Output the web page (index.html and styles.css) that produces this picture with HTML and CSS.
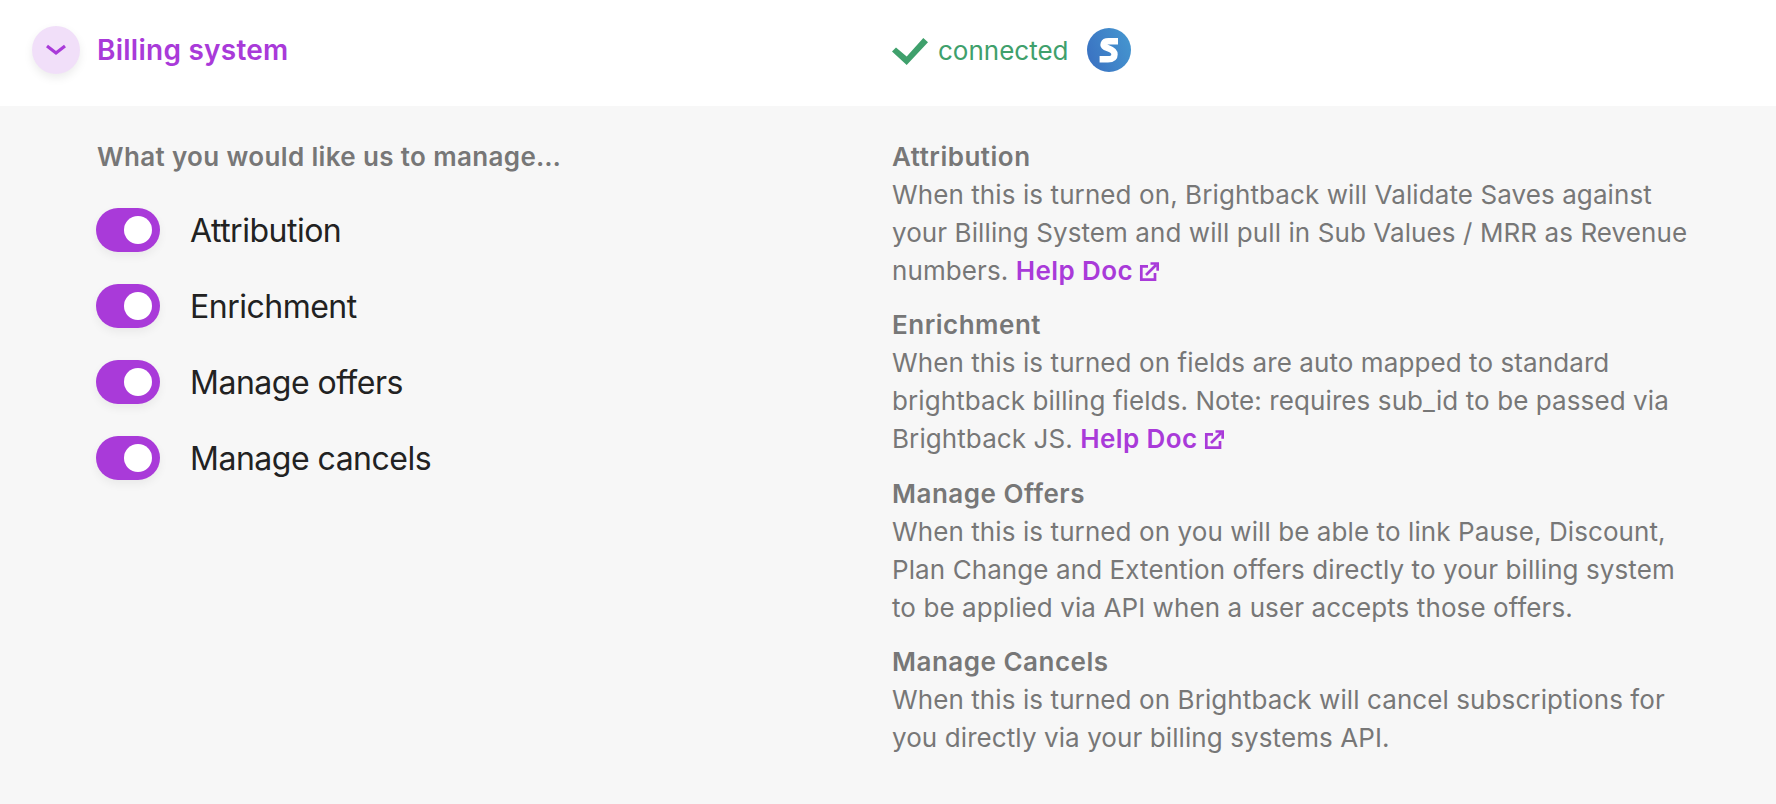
FILE: index.html
```html
<!DOCTYPE html>
<html lang="en">
<head>
<meta charset="utf-8">
<title>Billing system</title>
<link rel="stylesheet" href="styles.css">
</head>
<body>
<header class="head">
  <div class="head-left">
    <span class="chevron-btn">
      <svg width="22" height="14" viewBox="0 0 22 14"><path d="M2 3 L11 10 L20 3" fill="none" stroke="#a93ad9" stroke-width="3.200"/></svg>
    </span>
    <h1 class="title">Billing system</h1>
  </div>
  <div class="head-right">
    <svg width="36" height="30" viewBox="0 0 36 30"><path d="M0 16.500 L4 12.500 L14.700 21.500 L31.300 3 L36 7.300 L14.700 30 Z" fill="#3fa06c"/></svg>
    <span class="connected">connected</span>
    <span class="stripe">
      <svg width="44" height="44" viewBox="0 0 44 44">
        <defs><linearGradient id="g" x1="0" y1="0.7" x2="1" y2="0.3"><stop offset="0" stop-color="#3a72c2"/><stop offset="1" stop-color="#4595cf"/></linearGradient></defs>
        <circle cx="22" cy="22" r="22" fill="url(#g)"/>
        <path d="M31 13.300 H21.500 C16 13.300 15.500 17.500 18.500 19.300 C21 20.800 27.500 21.200 27.500 26.500 C27.500 30 24.500 31.200 21 31.200 H12.600" fill="none" stroke="#fff" stroke-width="6.400"/>
      </svg>
    </span>
  </div>
</header>
<main class="body">
  <section class="left">
    <p class="lead">What you would like us to manage…</p>
    <ul class="toggles">
      <li class="row"><span class="toggle"><span class="knob"></span></span>Attribution</li>
      <li class="row"><span class="toggle"><span class="knob"></span></span>Enrichment</li>
      <li class="row"><span class="toggle"><span class="knob"></span></span>Manage offers</li>
      <li class="row"><span class="toggle"><span class="knob"></span></span>Manage cancels</li>
    </ul>
  </section>
  <section class="right">
    <div class="info">
      <h2>Attribution</h2>
      <p>When this is turned on, Brightback will Validate Saves against your Billing System and will pull in Sub Values / MRR as Revenue numbers. <a class="help">Help Doc<svg class="ext" width="20" height="20" viewBox="0 0 20 20"><path d="M9 4.400H2.300V17.600H16V11M7 13L17 3M11.500 1.500H18.700V8.700" fill="none" stroke="#a93ad9" stroke-width="2.700"/></svg></a></p>
    </div>
    <div class="info">
      <h2>Enrichment</h2>
      <p>When this is turned on fields are auto mapped to standard brightback billing fields. Note: requires sub_id to be passed via Brightback JS. <a class="help">Help Doc<svg class="ext" width="20" height="20" viewBox="0 0 20 20"><path d="M9 4.400H2.300V17.600H16V11M7 13L17 3M11.500 1.500H18.700V8.700" fill="none" stroke="#a93ad9" stroke-width="2.700"/></svg></a></p>
    </div>
    <div class="info">
      <h2>Manage Offers</h2>
      <p>When this is turned on you will be able to link Pause, Discount, Plan Change and Extention offers directly to your billing system to be applied via API when a user accepts those offers.</p>
    </div>
    <div class="info">
      <h2>Manage Cancels</h2>
      <p>When this is turned on Brightback will cancel subscriptions for you directly via your billing systems API.</p>
    </div>
  </section>
</main>
</body>
</html>
```
FILE: styles.css
```css
* { box-sizing: border-box; }
html, body { margin: 0; padding: 0; height: 100%; }
body {
  font-family: "Inter", "Liberation Sans", sans-serif;
  background: #f7f7f7;
  overflow: hidden;
}
.head {
  height: 106px;
  padding-bottom: 6px;
  background: #fff;
  display: grid;
  grid-template-columns: 892px 1fr;
  align-items: center;
}
.head-left { display: flex; align-items: center; padding-left: 32px; gap: 17px; }
.chevron-btn {
  width: 48px;
  height: 48px;
  border-radius: 50%;
  background: #f1dff9;
  box-shadow: 0 4px 10px rgba(0, 0, 0, 0.08);
  display: flex;
  align-items: center;
  justify-content: center;
}
.title { margin: 0; font-size: 28px; font-weight: 600; letter-spacing: 0.25px; color: #a93ad9; }
.head-right { display: flex; align-items: center; }
.connected { margin-left: 10px; font-size: 26px; color: #3fa06c; }
.stripe { margin-left: 18px; display: flex; }
.body {
  display: grid;
  grid-template-columns: 892px 1fr;
  padding-top: 32px;
}
.left { padding-left: 97px; }
.lead { margin: 0; font-size: 26px; line-height: 38px; font-weight: 600; letter-spacing: 0.36px; color: #777; }
.toggles { list-style: none; margin: 32px 0 0 -1px; padding: 0; display: flex; flex-direction: column; gap: 32px; }
.row { display: flex; align-items: center; height: 44px; font-size: 32px; letter-spacing: -0.5px; color: #222; gap: 30px; }
.toggle {
  width: 64px;
  height: 44px;
  border-radius: 22px;
  background: #a93ad9;
  box-shadow: 0 4px 10px rgba(0, 0, 0, 0.06);
  display: flex;
  align-items: center;
  justify-content: flex-end;
  padding-right: 8px;
}
.knob { width: 28px; height: 28px; border-radius: 50%; background: #fff; }
.right { width: 800px; }
.info { margin-bottom: 16.33px; }
.info h2 { margin: 0; font-size: 26px; line-height: 38px; font-weight: 600; letter-spacing: 0.5px; color: #777; }
.info p { margin: 0; font-size: 26px; line-height: 38px; letter-spacing: 0.09px; color: #777; }
.help { font-weight: 600; letter-spacing: 0.4px; color: #a93ad9; white-space: nowrap; }
.ext { vertical-align: -2px; margin-left: 6px; }
```
